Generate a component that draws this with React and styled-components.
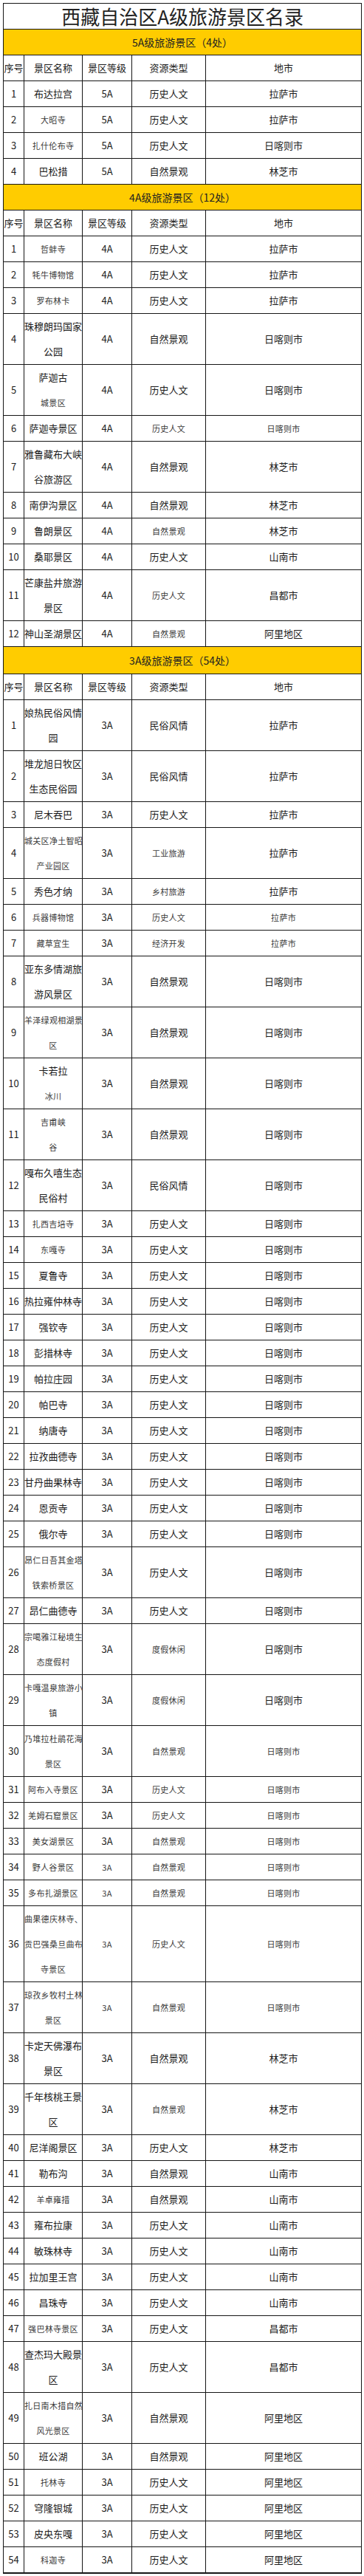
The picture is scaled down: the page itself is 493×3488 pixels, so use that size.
import styled, { createGlobalStyle } from "styled-components";

const GlobalStyle = createGlobalStyle`
  body {
    margin: 0;
    background: #fff;
  }
`;

const Page = styled.div`
  padding: 4px 0 0 4px;
  font-family: "Noto Sans CJK SC", "Noto Sans", sans-serif;
`;

const Table = styled.table`
  width: 485px;
  table-layout: fixed;
  border-collapse: collapse;
  color: #1c1c1c;
  td {
    border: 1px solid #161616;
    padding: 0;
    text-align: center;
    vertical-align: middle;
    white-space: nowrap;
  }
`;

const Col = styled.col`
  width: ${(p) => p.$w}px;
`;

const TitleCell = styled.td`
  font-size: 26px;
  line-height: 34px;
  color: #222;
`;

const SectionCell = styled.td`
  background: #ffcc00;
  font-size: 14px;
  line-height: ${(p) => p.$h || 34}px;
  color: #222;
`;

const HeadCell = styled.td`
  font-size: 13px;
  line-height: 34px;
`;

const Cell = styled.td`
  font-size: 13px;
  line-height: 34px;
`;

const Line = styled.span`
  display: block;
  font-size: ${(p) => (p.$small ? "11px" : "13px")};
  color: ${(p) => (p.$small ? "#3a3a3a" : "#1c1c1c")};
  letter-spacing: ${(p) => (p.$small ? "0.3px" : "0")};
`;

// "~" in front of a line = smaller grey text, "|" = line break
const Text = ({ value }) =>
  value.split("|").map((l, i) => (
    <Line key={i} $small={l.startsWith("~")}>
      {l.replace(/^~/, "")}
    </Line>
  ));

const sections = [
  {
    title: "5A级旅游景区（4处）",
    rows: [
      ["布达拉宫", "5A", "历史人文", "拉萨市"],
      ["~大昭寺", "5A", "历史人文", "拉萨市"],
      ["~扎什伦布寺", "5A", "历史人文", "日喀则市"],
      ["巴松措", "5A", "自然景观", "林芝市"],
    ],
  },
  {
    title: "4A级旅游景区（12处）",
    rows: [
      ["~哲蚌寺", "4A", "历史人文", "拉萨市"],
      ["~牦牛博物馆", "4A", "历史人文", "拉萨市"],
      ["~罗布林卡", "4A", "历史人文", "拉萨市"],
      ["珠穆朗玛国家|公园", "4A", "自然景观", "日喀则市"],
      ["萨迦古|~城景区", "4A", "历史人文", "日喀则市"],
      ["萨迦寺景区", "4A", "~历史人文", "~日喀则市"],
      ["雅鲁藏布大峡|谷旅游区", "4A", "自然景观", "林芝市"],
      ["南伊沟景区", "4A", "自然景观", "林芝市"],
      ["鲁朗景区", "4A", "~自然景观", "林芝市"],
      ["桑耶景区", "4A", "历史人文", "山南市"],
      ["芒康盐井旅游|景区", "4A", "~历史人文", "昌都市"],
      ["神山圣湖景区", "4A", "~自然景观", "阿里地区"],
    ],
  },
  {
    title: "3A级旅游景区（54处）",
    h: 36,
    rows: [
      ["娘热民俗风情|园", "3A", "民俗风情", "拉萨市"],
      ["堆龙旭日牧区|生态民俗园", "3A", "民俗风情", "拉萨市"],
      ["尼木吞巴", "3A", "历史人文", "拉萨市"],
      ["~城关区净土智昭|~产业园区", "3A", "~工业旅游", "拉萨市"],
      ["秀色才纳", "3A", "~乡村旅游", "拉萨市"],
      ["~兵器博物馆", "3A", "~历史人文", "~拉萨市"],
      ["~藏草宜生", "3A", "~经济开发", "~拉萨市"],
      ["亚东多情湖旅|游风景区", "3A", "自然景观", "日喀则市"],
      ["~羊泽绿观相湖景|~区", "3A", "自然景观", "日喀则市"],
      ["卡若拉|~冰川", "3A", "自然景观", "日喀则市"],
      ["~吉甫峡|~谷", "3A", "自然景观", "日喀则市"],
      ["嘎布久嘻生态|民俗村", "3A", "民俗风情", "日喀则市"],
      ["~扎西吉培寺", "3A", "历史人文", "日喀则市"],
      ["~东嘎寺", "3A", "历史人文", "日喀则市"],
      ["夏鲁寺", "3A", "历史人文", "日喀则市"],
      ["热拉雍仲林寺", "3A", "历史人文", "日喀则市"],
      ["强钦寺", "3A", "历史人文", "日喀则市"],
      ["彭措林寺", "3A", "历史人文", "日喀则市"],
      ["帕拉庄园", "3A", "历史人文", "日喀则市"],
      ["帕巴寺", "3A", "历史人文", "日喀则市"],
      ["纳唐寺", "3A", "历史人文", "日喀则市"],
      ["拉孜曲德寺", "3A", "历史人文", "日喀则市"],
      ["甘丹曲果林寺", "3A", "历史人文", "日喀则市"],
      ["恩贡寺", "3A", "历史人文", "日喀则市"],
      ["俄尔寺", "3A", "历史人文", "日喀则市"],
      ["~昂仁日吾其金塔|~铁索桥景区", "3A", "历史人文", "日喀则市"],
      ["昂仁曲德寺", "3A", "历史人文", "日喀则市"],
      ["~宗噶雅江秘境生|~态度假村", "3A", "~度假休闲", "日喀则市"],
      ["~卡嘎温泉旅游小|~镇", "3A", "~度假休闲", "日喀则市"],
      ["~乃堆拉杜鹃花海|~景区", "3A", "~自然景观", "~日喀则市"],
      ["~阿布入寺景区", "3A", "~历史人文", "~日喀则市"],
      ["~羌姆石窟景区", "3A", "~历史人文", "~日喀则市"],
      ["~美女湖景区", "3A", "~自然景观", "~日喀则市"],
      ["~野人谷景区", "~3A", "~自然景观", "~日喀则市"],
      ["~多布扎湖景区", "~3A", "~自然景观", "~日喀则市"],
      ["~曲果德庆林寺、|~贡巴强桑旦曲布|~寺景区", "~3A", "~历史人文", "~日喀则市"],
      ["~琼孜乡牧村土林|~景区", "~3A", "~自然景观", "~日喀则市"],
      ["卡定天佛瀑布|景区", "3A", "自然景观", "林芝市"],
      ["千年核桃王景|区", "3A", "~自然景观", "林芝市"],
      ["尼洋阁景区", "3A", "历史人文", "林芝市"],
      ["勒布沟", "3A", "自然景观", "山南市"],
      ["~羊卓雍措", "3A", "自然景观", "山南市"],
      ["雍布拉康", "3A", "历史人文", "山南市"],
      ["敏珠林寺", "3A", "历史人文", "山南市"],
      ["拉加里王宫", "3A", "历史人文", "山南市"],
      ["昌珠寺", "3A", "历史人文", "山南市"],
      ["~强巴林寺景区", "3A", "历史人文", "昌都市"],
      ["查杰玛大殿景|区", "3A", "历史人文", "昌都市"],
      ["~扎日南木措自然|~风光景区", "3A", "自然景观", "阿里地区"],
      ["班公湖", "3A", "自然景观", "阿里地区"],
      ["~托林寺", "3A", "历史人文", "阿里地区"],
      ["穹隆银城", "3A", "历史人文", "阿里地区"],
      ["皮央东嘎", "3A", "历史人文", "阿里地区"],
      ["~科迦寺", "3A", "历史人文", "阿里地区"],
    ],
  },
];

const heads = ["序号", "景区名称", "景区等级", "资源类型", "地市"];
const widths = [28, 79, 67, 100, 211];

const App = () => (
  <Page>
    <GlobalStyle />
    <Table>
      <colgroup>
        {widths.map((w, i) => (
          <Col key={i} $w={w} />
        ))}
      </colgroup>
      <tbody>
        <tr>
          <TitleCell colSpan={5}>西藏自治区A级旅游景区名录</TitleCell>
        </tr>
        {sections.map((s) => [
          <tr key={s.title}>
            <SectionCell colSpan={5} $h={s.h}>
              {s.title}
            </SectionCell>
          </tr>,
          <tr key={s.title + "-head"}>
            {heads.map((h) => (
              <HeadCell key={h}>{h}</HeadCell>
            ))}
          </tr>,
          ...s.rows.map((r, i) => (
            <tr key={s.title + i}>
              <Cell>{i + 1}</Cell>
              {r.map((v, j) => (
                <Cell key={j}>
                  <Text value={v} />
                </Cell>
              ))}
            </tr>
          )),
        ])}
        <tr>
          <SectionCell colSpan={5} $h={3} />
        </tr>
      </tbody>
    </Table>
  </Page>
);

export default App;
